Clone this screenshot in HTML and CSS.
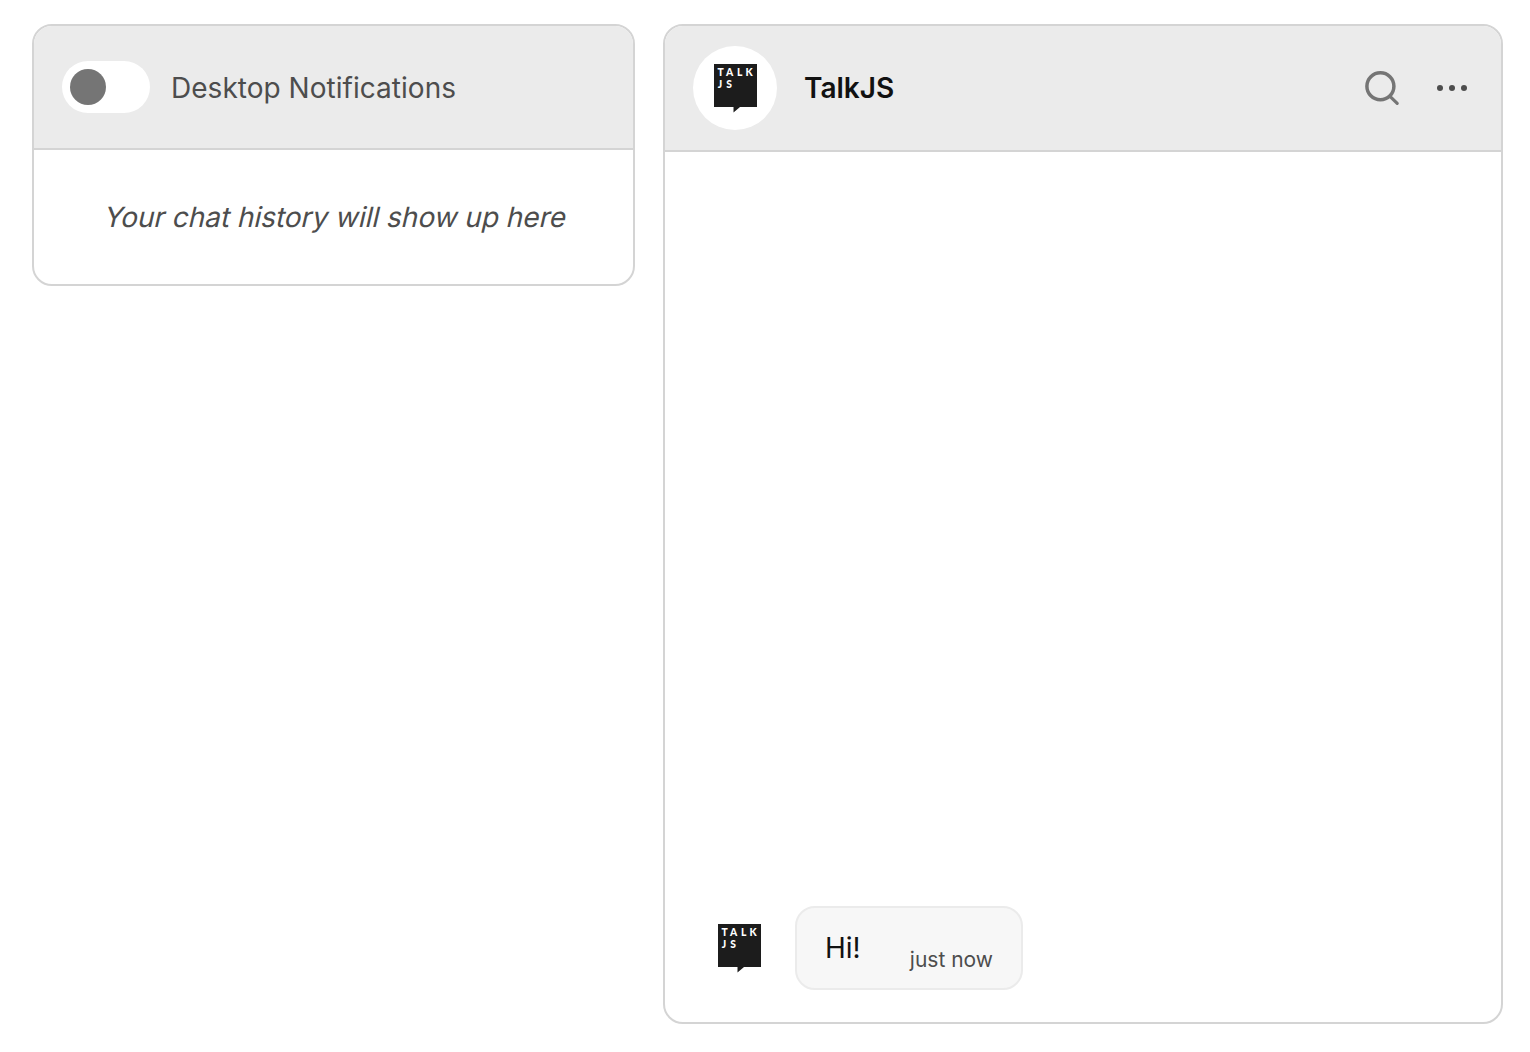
FILE: index.html
```html
<!DOCTYPE html>
<html lang="en">
<head>
<meta charset="utf-8">
<title>TalkJS</title>
<link rel="stylesheet" href="styles.css">
</head>
<body>
<main class="app">
  <aside class="panel inbox">
    <header class="inbox-header">
      <span class="toggle"><span class="knob"></span></span>
      <span class="toggle-label">Desktop Notifications</span>
    </header>
    <p class="empty">Your chat history will show up here</p>
  </aside>
  <section class="panel chat">
    <header class="chat-header">
      <span class="avatar">
        <svg class="logo" viewBox="0 0 44 49">
          <path d="M0 0H43V43H26L19.5 48.5V43H0Z" fill="#1c1c1c"/>
          <text y="11.8" x="3.5 11.9 23 31.5">TALK</text>
          <text y="23.5" x="3.8 12.3">JS</text>
        </svg>
      </span>
      <h1 class="title">TalkJS</h1>
      <svg class="search" viewBox="0 0 36 36" fill="none" stroke="#757575" stroke-width="3.5" stroke-linecap="round">
        <circle cx="16.4" cy="16.3" r="13.5"/>
        <path d="M26 26.3L33.2 33.3" stroke-width="3.2"/>
      </svg>
      <svg class="more" viewBox="0 0 32 8" fill="#4d4d4d">
        <circle cx="4" cy="4" r="3"/><circle cx="16" cy="4" r="3"/><circle cx="28" cy="4" r="3"/>
      </svg>
    </header>
    <div class="messages">
      <div class="message">
        <svg class="logo" viewBox="0 0 44 49">
          <path d="M0 0H43V43H26L19.5 48.5V43H0Z" fill="#1c1c1c"/>
          <text y="11.8" x="3.5 11.9 23 31.5">TALK</text>
          <text y="23.5" x="3.8 12.3">JS</text>
        </svg>
        <div class="bubble">
          <span class="text">Hi!</span>
          <span class="time">just now</span>
        </div>
      </div>
    </div>
  </section>
</main>
</body>
</html>
```
FILE: styles.css
```css
* { box-sizing: border-box; }
body {
  margin: 0;
  background: #fff;
  color: #111;
  font: 28px/40px Inter, sans-serif;
}
.app {
  display: flex;
  align-items: flex-start;
  gap: 28px;
  height: 1052px;
  padding: 24px 27px 28px 32px;
}
.panel {
  border: 2px solid #d4d4d4;
  border-radius: 20px;
  overflow: hidden;
  background: #fff;
}
.inbox { width: 603px; height: 262px; }
.inbox-header, .chat-header {
  display: flex;
  align-items: center;
  background: #ebebeb;
  border-bottom: 2px solid #d4d4d4;
}
.inbox-header { height: 124px; padding-left: 28px; }
.toggle {
  width: 88px;
  height: 52px;
  padding: 8px;
  border-radius: 26px;
  background: #fff;
}
.knob {
  display: block;
  width: 36px;
  height: 36px;
  border-radius: 50%;
  background: #757575;
}
.toggle-label {
  margin: 2px 0 0 21px;
  letter-spacing: 0.03px;
  color: #4d4d4d;
}
/* slanted upright face rather than the true italic */
.empty {
  margin: 47px 0 0;
  padding-left: 5px;
  text-align: center;
  letter-spacing: -0.03px;
  transform: skewX(-13deg);
  color: #4d4d4d;
}
.chat {
  flex: 1;
  height: 1000px;
  display: flex;
  flex-direction: column;
}
.chat-header { height: 126px; padding: 0 33px 0 28px; }
.avatar {
  display: flex;
  align-items: center;
  justify-content: center;
  width: 84px;
  height: 84px;
  padding-left: 1px;
  border-radius: 50%;
  background: #fff;
}
.logo { width: 44px; height: 49px; flex: none; }
.logo text {
  fill: #fff;
  font: 900 10.3px Lato, sans-serif;
}
.title {
  flex: 1;
  margin: 0 0 0 27px;
  font-size: 28px;
  font-weight: 600;
}
.search { width: 36px; height: 36px; }
.more { width: 32px; height: 8px; margin-left: 36px; }
.messages {
  flex: 1;
  display: flex;
  flex-direction: column;
  justify-content: flex-end;
  padding: 0 0 32px 53px;
}
.message { display: flex; align-items: center; }
.bubble {
  display: flex;
  width: 228px;
  height: 84px;
  margin-left: 33px;
  padding: 20px 28px;
  justify-content: space-between;
  border: 2px solid #ebebeb;
  border-radius: 20px;
  background: #f7f7f7;
}
.time { padding-top: 12px; font-size: 21px; color: #4d4d4d; }
```
